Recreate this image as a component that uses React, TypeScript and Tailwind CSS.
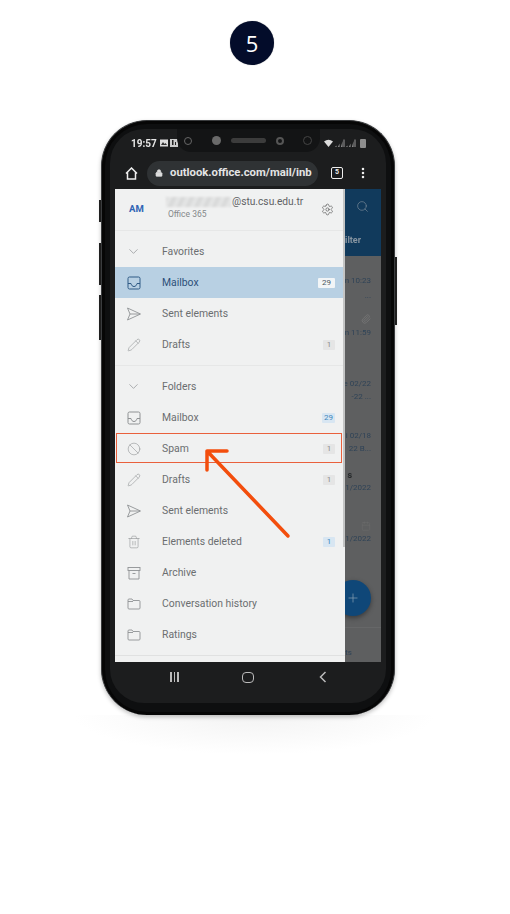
import { ChevronDown, Pencil, Ban, Trash2, Lock, MoreVertical, Search, Paperclip, Calendar, Settings, Plus } from 'lucide-react';

function MailboxIcon({ color = '#8f9294' }: { color?: string }) {
  return (
    <svg width="14" height="14" viewBox="0 0 14 14" fill="none" stroke={color} strokeWidth="1">
      <rect x="1" y="1" width="12" height="12" rx="1.5" />
      <path d="M1 7.5h3c.5 2 1.500 3 3 3s2.500-1 3-3h3" />
    </svg>
  );
}

function SentIcon() {
  return (
    <svg width="16" height="14" viewBox="0 0 16 14" fill="none" stroke="#8f9294" strokeWidth="0.9" strokeLinejoin="round">
      <path d="M1.500 1l13 6-13 6 2.500-6zM4 7h10" />
    </svg>
  );
}

function ArchiveIcon() {
  return (
    <svg width="14" height="14" viewBox="0 0 14 14" fill="none" stroke="#8f9294" strokeWidth="0.9">
      <rect x="1" y="1.500" width="12" height="3" />
      <path d="M2 4.500V13h10V4.500M5.500 7.500h3" />
    </svg>
  );
}

function FolderIcon() {
  return (
    <svg width="14" height="12" viewBox="0 0 14 12" fill="none" stroke="#8f9294" strokeWidth="0.9">
      <path d="M1 2a1 1 0 011-1h3l1 1.500h6a1 1 0 011 1V10a1 1 0 01-1 1H2a1 1 0 01-1-1zM1 3.500h5" />
    </svg>
  );
}

function SignalBars() {
  return (
    <svg width="10" height="9" viewBox="0 0 10 9" fill="#9a9a9a">
      <path d="M0 8l1.500-1.500V8zM3 8l1.500-3.500V8zM6 8l1.500-6V8z" />
      <path d="M8.500 0.500h1V8h-1z" />
    </svg>
  );
}

const iconProps = { size: 14, strokeWidth: 1, color: '#8f9294' };

type Row = { icon: React.ReactNode; label: string; count?: string; tone?: 'gray' | 'blue' };

const favorites: Row[] = [
  { icon: <SentIcon />, label: 'Sent elements' },
  { icon: <Pencil {...iconProps} />, label: 'Drafts', count: '1', tone: 'gray' },
];

const folders: Row[] = [
  { icon: <MailboxIcon />, label: 'Mailbox', count: '29', tone: 'blue' },
  { icon: <Ban {...iconProps} />, label: 'Spam', count: '1', tone: 'gray' },
  { icon: <Pencil {...iconProps} />, label: 'Drafts', count: '1', tone: 'gray' },
  { icon: <SentIcon />, label: 'Sent elements' },
  { icon: <Trash2 {...iconProps} />, label: 'Elements deleted', count: '1', tone: 'blue' },
  { icon: <ArchiveIcon />, label: 'Archive' },
  { icon: <FolderIcon />, label: 'Conversation history' },
  { icon: <FolderIcon />, label: 'Ratings' },
];

function FolderRow({ row }: { row: Row }) {
  return (
    <div className="flex items-center h-[31px] pr-[10px]">
      <div className="w-[36px] pl-[1px] flex justify-center shrink-0">{row.icon}</div>
      <span className="ml-[11px] flex-1 text-[10.400px] text-[#6b6e70]">{row.label}</span>
      {row.count && (
        <span
          className={
            row.tone === 'blue'
              ? 'h-[10px] min-w-[12px] px-[2px] rounded-[1px] bg-[#d8e6f2] text-[#3f86bd] text-[8px] leading-[10px] text-center'
              : 'h-[10px] min-w-[12px] px-[2px] rounded-[1px] bg-[#e5e5e5] text-[#8b8b8b] text-[8px] leading-[10px] text-center'
          }
        >
          {row.count}
        </span>
      )}
    </div>
  );
}

function GroupTitle({ label }: { label: string }) {
  return (
    <div className="flex items-center h-[31px]">
      <div className="w-[36px] pl-[1px] flex justify-center shrink-0">
        <ChevronDown size={15} strokeWidth={1} color="#808386" />
      </div>
      <span className="ml-[11px] text-[10.400px] text-[#6b6e70]">{label}</span>
    </div>
  );
}

function Peek({ text, h, bold, far }: { text: string; h: number; bold?: boolean; far?: boolean }) {
  return (
    <div style={{ height: h }} className={far ? 'flex items-end justify-end pr-[29px]' : 'flex items-end justify-end pr-[10px]'}>
      <span className={bold ? 'whitespace-nowrap text-[9px] leading-[12px] font-bold text-[#26292b]' : 'whitespace-nowrap text-[8px] leading-[12px] text-[#2f4357]'}>
        {text}
      </span>
    </div>
  );
}

export default function App() {
  return (
    <div className="relative w-[510px] h-[914px] bg-white overflow-hidden flex flex-col font-['Roboto',sans-serif]">
      <div className="ml-[230px] mt-[21px] w-[44px] h-[44px] rounded-full bg-[#030c2a] text-white flex items-center justify-center text-[22px] font-['Open_Sans',sans-serif] shadow-[0_0_1px_#888]">
        5
      </div>

      {/* phone */}
      <div className="relative ml-[101px] mt-[55px] w-[294px] h-[595px] z-10">
        <div className="absolute left-[-2px] top-[80px] w-[2px] h-[22px] bg-[#222]" />
        <div className="absolute left-[-2px] top-[123px] w-[2px] h-[42px] bg-[#222]" />
        <div className="absolute left-[-2px] top-[175px] w-[2px] h-[45px] bg-[#222]" />
        <div className="absolute right-[-2px] top-[137px] w-[2px] h-[68px] bg-[#222]" />

        <div className="w-full h-full rounded-[46px] bg-[#060606] border-t border-x border-[#3a3c3e] p-[3px] blur-[0.4px] shadow-[0_2px_4px_rgba(0,0,0,0.25)]">
          <div className="rounded-[42px] bg-[#0e0f10] px-[5px] pt-[5px] pb-[9px] h-full">
            <div className="relative rounded-[34px] bg-[#1c1d1e] px-[5px] h-full flex flex-col overflow-hidden">
              {/* status bar */}
              <div className="relative h-[28px] shrink-0 flex items-center text-white">
                <span className="ml-[16px] text-[10px] font-bold text-[#e6e6e6]">19:57</span>
                <svg className="ml-[3px]" width="8" height="8" viewBox="0 0 8 8">
                  <rect width="8" height="7" y="0.500" fill="#ddd" />
                  <path d="M1 6l2-3 1.500 2 1-1 1.500 2z" fill="#333" />
                </svg>
                <svg className="ml-[2px]" width="8" height="8" viewBox="0 0 8 8">
                  <rect width="8" height="8" fill="#ccc" />
                  <path d="M2 1v5h1.500V1zM5 3v3h1V3z" fill="#222" />
                </svg>
                <div className="absolute left-[62px] top-0 w-[143px] h-[23px] rounded-b-[14px] bg-[#131415] flex items-center">
                  <div className="ml-[7px] w-[8px] h-[8px] rounded-full border border-[#666]" />
                  <div className="ml-[20px] w-[9px] h-[9px] rounded-full bg-[#6a6a6a]" />
                  <div className="ml-[10px] w-[35px] h-[5px] rounded-full bg-[#3c3c3c]" />
                  <div className="ml-[10px] w-[8px] h-[8px] rounded-full border-2 border-[#555]" />
                  <div className="ml-[19px] w-[9px] h-[9px] rounded-full border border-[#444]" />
                </div>
                <div className="ml-auto mr-[15px] flex items-center gap-[1px]">
                  <svg width="9" height="8" viewBox="0 0 9 8" fill="#ddd" className="mr-[1px]">
                    <path d="M0 2.500Q4.500-1 9 2.500L4.500 8z" />
                  </svg>
                  <SignalBars />
                  <SignalBars />
                  <div className="ml-[3px] w-[6px] h-[9px] rounded-[1px] bg-[#8e8e8e]" />
                </div>
              </div>

              {/* browser bar */}
              <div className="h-[32px] shrink-0 flex items-center">
                <svg className="ml-[10px]" width="13" height="13" viewBox="0 0 13 13" fill="none" stroke="#eee" strokeWidth="1.500">
                  <path d="M1 6.500L6.500 1 12 6.500M2.500 5.500V12h8V5.500" />
                </svg>
                <div className="ml-[9px] w-[171px] h-[25px] rounded-full bg-[#2f3234] flex items-center">
                  <Lock size={8} fill="#ddd" color="#ddd" className="ml-[8px]" />
                  <span className="ml-[7px] text-[11.300px] font-bold text-[#e4e4e4] whitespace-nowrap">outlook.office.com/mail/inb</span>
                </div>
                <div className="ml-[13px] w-[12px] h-[12px] rounded-[2px] border-[1.500px] border-[#eee] text-[7px] font-bold text-[#eee] leading-[9px] text-center">
                  5
                </div>
                <MoreVertical size={14} strokeWidth={2.4} color="#eee" className="ml-[13px]" />
              </div>

              {/* mail app */}
              <div className="relative h-[473px] shrink-0 flex bg-[#5e5f60] overflow-hidden">
                <div className="relative w-[230px] shrink-0 bg-[#f0f1f1] flex flex-col">
                  <div className="h-[41px] flex items-center shrink-0">
                    <span className="ml-[14px] w-[37px] text-[9.500px] font-bold text-[#2e64b4]">AM</span>
                    <div className="flex-1 -mt-[1px]">
                      <div className="flex items-center h-[11px] -mt-[2px]">
                        <div className="w-[65px] h-[10px] blur-[1px] bg-[repeating-linear-gradient(115deg,#d8d9d9_0px,#e6e7e7_4px,#d4d5d5_8px)]" />
                        <span className="ml-[1px] text-[10.200px] text-[#5f6264]">@stu.csu.edu.tr</span>
                      </div>
                      <span className="block ml-[2px] mt-[1px] text-[8.500px] leading-[11px] text-[#85888a]">Office 365</span>
                    </div>
                    <Settings size={13} strokeWidth={1.1} color="#444" className="mr-[11px]" />
                  </div>
                  <div className="pt-[5px] pb-[5px] border-t border-[#e6e7e7]">
                    <GroupTitle label="Favorites" />
                    <div className="flex items-center h-[31px] pr-[10px] bg-[#b8d0e3]">
                      <div className="w-[36px] pl-[1px] flex justify-center shrink-0">
                        <MailboxIcon color="#2f5a85" />
                      </div>
                      <span className="ml-[11px] flex-1 text-[10.400px] text-[#2c4f78]">Mailbox</span>
                      <span className="h-[10px] w-[17px] rounded-[1px] bg-[#f2f5f7] text-[#4a5560] text-[8px] leading-[10px] text-center">29</span>
                    </div>
                    {favorites.map(r => <FolderRow key={r.label} row={r} />)}
                  </div>
                  <div className="pt-[5px] pb-[5px] border-t border-[#e6e7e7]">
                    <GroupTitle label="Folders" />
                    {folders.map(r => <FolderRow key={r.label} row={r} />)}
                  </div>
                  <div className="border-t border-[#e0e1e1] flex-1" />
                  <div className="absolute right-0 top-0 w-[2px] h-[358px] bg-[#c4c5c5]" />
                </div>

                {/* dimmed message list behind the drawer */}
                <div className="relative flex-1 min-w-0 overflow-hidden">
                  <div className="h-[67px] bg-[#113a5c] relative">
                    <Search size={13} strokeWidth={1.2} color="#7d8d9b" className="absolute left-[11px] top-[11px]" />
                    <span className="absolute left-0 top-[45px] whitespace-nowrap text-[9px] font-bold leading-[12px] text-[#8895a1]">ilter</span>
                  </div>
                  <Peek text="n 10:23" h={31} />
                  <Peek text="..." h={15} />
                  <div className="h-[22px] flex justify-end items-end pr-[10px]">
                    <Paperclip size={10} color="#777" />
                  </div>
                  <Peek text="n 11:59" h={15} />
                  <Peek text="e 02/22" h={51} />
                  <Peek text="-22 ..." h={13} />
                  <Peek text="i 02/18" h={39} />
                  <Peek text="22 B..." h={13} />
                  <Peek text="s" h={26} bold far />
                  <Peek text="1/2022" h={13} />
                  <div className="h-[37px] flex justify-end items-end pr-[10px]">
                    <Calendar size={10} strokeWidth={1.2} color="#6f6f6f" />
                  </div>
                  <Peek text="1/2022" h={14} />
                  <div className="mt-[82px] border-t border-[#666768]" />
                  <Peek text="ts" h={31} far />
                  <div className="absolute left-[-10px] top-[391px] w-[36px] h-[36px] rounded-full bg-[#0f4778] shadow-[0_2px_5px_rgba(0,0,0,0.4)] flex items-center justify-center">
                    <Plus size={14} strokeWidth={1.2} color="#8aa0b3" className="ml-[-1px]" />
                  </div>
                </div>

                {/* spam highlight and arrow */}
                <div className="absolute left-[1px] top-[244px] w-[226px] h-[30px] border-[1.500px] border-[#e9603c]" />
                <svg className="absolute left-[80px] top-[251px]" width="110" height="105" viewBox="0 0 110 105" fill="none" stroke="#f34e0d" strokeWidth="3.500" strokeLinecap="round">
                  <path d="M12 11h20M12 11v19M12 11l81 85" />
                </svg>
              </div>

              {/* android nav */}
              <div className="h-[30px] flex items-center">
                <div className="ml-[55px] flex gap-[2px]">
                  <div className="w-[1.500px] h-[10px] bg-[#bbb]" />
                  <div className="w-[1.500px] h-[10px] bg-[#bbb]" />
                  <div className="w-[1.500px] h-[10px] bg-[#bbb]" />
                </div>
                <div className="ml-[63px] w-[12px] h-[11px] rounded-[4px] border-[1.500px] border-[#bbb]" />
                <svg className="ml-[65px]" width="8" height="12" viewBox="0 0 8 12" fill="none" stroke="#bbb" strokeWidth="1.500">
                  <path d="M6.500 1L1.500 6l5 5" />
                </svg>
              </div>
            </div>
          </div>
        </div>
      </div>

      <div className="ml-[72px] w-[365px] h-[40px] bg-[radial-gradient(ellipse_at_top,#f3f3f3,#ffffff_70%)]" />
    </div>
  );
}
